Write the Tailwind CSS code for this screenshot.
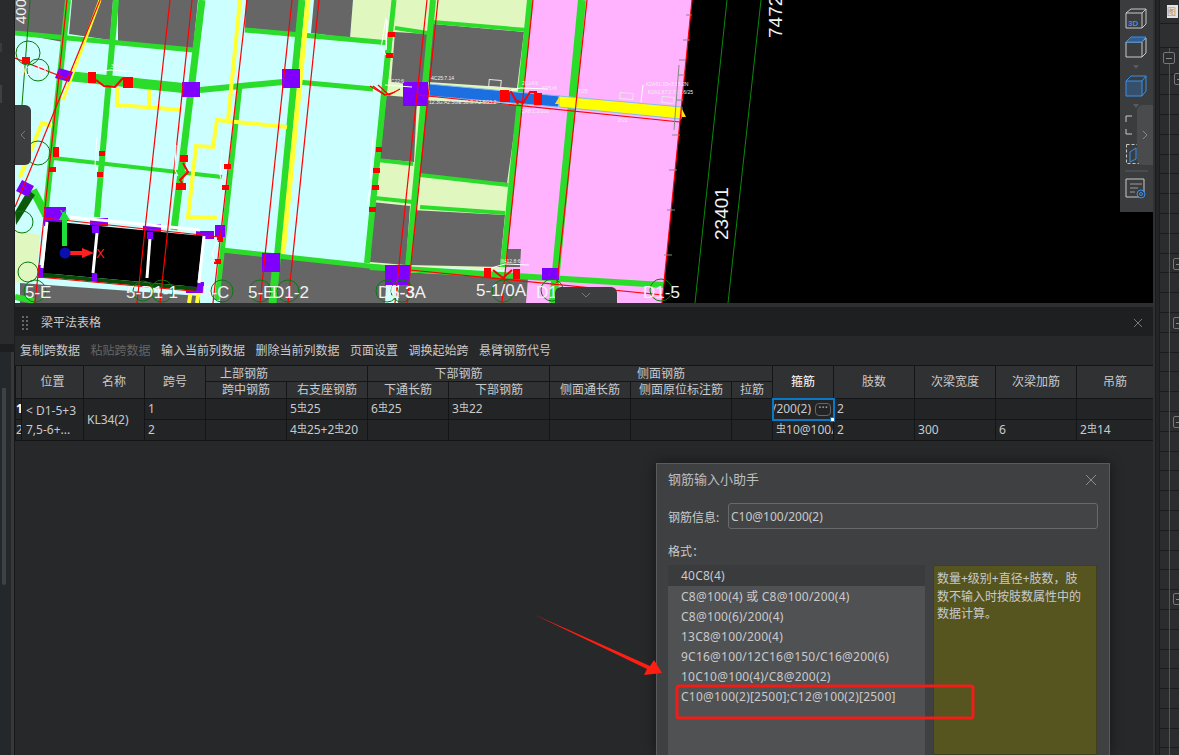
<!DOCTYPE html>
<html lang="zh">
<head>
    <meta charset="UTF-8">
    <title>梁平法表格</title>
    <script src="https://cdn.jsdelivr.net/npm/@tailwindcss/browser@4"></script>
</head>
<body class="bg-[#1b1c1d]">
<div class="relative flex w-[1179px] h-[755px] overflow-hidden text-xs text-[#c9cacb] font-['Noto_Sans','Noto_Sans_CJK_SC',sans-serif]">

    <!-- left dock -->
    <div class="flex flex-col w-[15px] shrink-0 bg-[#2a2b2c]">
        <div class="h-[344px] border-r border-[#1d1e1f] flex flex-col gap-[33px] pt-[43px]">
            <div class="w-[2px] h-[9px] bg-[#3a3b3c]"></div>
            <div class="w-[2px] h-[18px] bg-[#3f4041]"></div>
        </div>
        <div class="h-[8px] bg-[#1d1e1f]"></div>
        <div class="flex-1 flex">
            <div class="w-[11px] pt-[36px] pl-[2px] bg-[#25282a]">
                <div class="w-[4px] h-[197px] rounded-b-sm bg-[#3f4244]"></div>
            </div>
            <div class="w-[4px] bg-[#37383a] border-r border-[#18191a]"></div>
        </div>
    </div>

    <!-- centre -->
    <div class="flex flex-col w-[1138px] shrink-0">
        <div class="relative h-[303px] bg-black overflow-hidden">
            <svg class="block" width="1138" height="303" viewBox="15 0 1138 303" fill="none">
                <!-- floor -->
                <polygon points="15,0 533,0 502,303 15,303" fill="#ccffff"/>
                <polygon points="533,0 692,0 662,303 502,303" fill="#ffb3ff"/>
                <polygon points="15,230 40,235 36,280 15,283" fill="#e0f8c0"/>
                <polygon points="390,0 533,0 505,270 368,265" fill="#e0f8c0"/>
                <polygon points="353,0 390,0 386,42 350,38" fill="#e0f8c0"/>
                <!-- grey rooms -->
                <g fill="#666666">
                    <polygon points="15,0 66,0 63,42 15,33"/>
                    <polygon points="72,0 113,0 110,40 69,34"/>
                    <polygon points="118,0 198,0 193,50 118,41"/>
                    <polygon points="246,0 300,0 297,33 245,28"/>
                    <polygon points="314,0 353,0 350,38 311,33"/>
                    <polygon points="395,32 428,34 423,86 391,82"/>
                    <polygon points="433,24 524,32 517,88 428,82"/>
                    <polygon points="383,95 417,98 414,162 380,159"/>
                    <polygon points="422,100 518,105 507,183 418,176"/>
                    <polygon points="372,202 410,206 406,265 370,262"/>
                    <polygon points="412,210 505,215 500,267 409,265"/>
                    <polygon points="388,115 400,116 396,159 383,158"/>
                    <polygon points="222,252 387,269 385,303 220,303"/>
                    <polygon points="400,272 528,278 526,303 398,303"/>
                    <polygon points="20,283 200,296 200,303 20,303"/>
                    <polygon points="507,249 521,249 520,267 505,267"/>
                </g>
                <!-- walls -->
                <g stroke="#2bdc2b" stroke-width="5">
                    <line x1="15" y1="33" x2="193" y2="50"/>
                    <line x1="245" y1="30" x2="390" y2="43"/>
                    <line x1="68" y1="0" x2="45" y2="217" stroke-width="6"/>
                    <line x1="116" y1="0" x2="97" y2="217" stroke-width="6"/>
                    <line x1="202" y1="0" x2="174" y2="230" stroke-width="7"/>
                    <line x1="240" y1="85" x2="217" y2="300"/>
                    <line x1="302" y1="0" x2="273" y2="303" stroke-width="7"/>
                    <line x1="390" y1="33" x2="367" y2="263" stroke-width="6"/>
                    <line x1="68" y1="76" x2="183" y2="88" stroke-width="10"/>
                    <line x1="200" y1="90" x2="283" y2="82" stroke-width="6"/>
                    <line x1="298" y1="82" x2="373" y2="89"/>
                    <line x1="53" y1="158" x2="222" y2="177" stroke-width="4"/>
                    <line x1="222" y1="250" x2="387" y2="268"/>
                    <line x1="377" y1="160" x2="413" y2="164" stroke-width="4"/>
                    <line x1="375" y1="198" x2="413" y2="202" stroke-width="4"/>
                    <line x1="395" y1="28" x2="428" y2="33" stroke-width="4"/>
                    <line x1="433" y1="22" x2="527" y2="30" stroke-width="4"/>
                    <line x1="420" y1="175" x2="508" y2="185" stroke-width="4"/>
                    <line x1="420" y1="207" x2="505" y2="213" stroke-width="4"/>
                    <line x1="394" y1="0" x2="372" y2="210"/>
                    <line x1="433" y1="0" x2="408" y2="267" stroke-width="6"/>
                    <line x1="530" y1="0" x2="503" y2="267" stroke-width="6"/>
                    <line x1="582" y1="0" x2="553" y2="303" stroke-width="8"/>
                    <line x1="370" y1="267" x2="663" y2="285" stroke-width="6"/>
                    <line x1="15" y1="297" x2="34" y2="301" stroke-width="6"/>
                    <line x1="275" y1="272" x2="272" y2="303" stroke-width="7"/>
                    <line x1="33" y1="190" x2="46" y2="215" stroke-width="8"/>
                </g>
                <polygon points="16,225 35,195 28,190 15,212" fill="#0a5a0a"/>
                <!-- yellow -->
                <g stroke="#ffff33" stroke-width="4">
                    <polyline points="117,87 117,105 182,110"/>
                    <line x1="149" y1="90" x2="149" y2="107"/>
                    <polyline points="287,127 217,120 213,147 196,146 188,217 217,218"/>
                    <line x1="240" y1="0" x2="228" y2="120"/>
                    <line x1="308" y1="0" x2="283" y2="253" stroke-width="5"/>
                    <line x1="100" y1="0" x2="63" y2="100" stroke-width="3"/>
                    <polyline points="52,126 42,123 20,177" stroke-width="4"/>
                    <line x1="191" y1="290" x2="189" y2="303"/>
                    <line x1="199" y1="290" x2="197" y2="303"/>
                </g>
                <!-- active beam -->
                <polygon points="429,84 560,96 558,107 429,96" fill="#1b6fe0" stroke="#8bb8f0"/>
                <polygon points="559,96 682,107 681,119 559,107" fill="#ffff00" stroke="#8bb8f0"/>
                <polygon points="421,92 430,92 425,83" fill="#ffdf20"/>
                <polygon points="555,104 560,104 559,97" fill="#ffdf20"/>
                <polygon points="682,117 686,117 682,109" fill="#ffdf20"/>
                <!-- columns -->
                <g fill="#8000ff">
                    <rect x="182" y="82" width="18" height="15"/>
                    <rect x="282" y="69" width="18" height="19"/>
                    <rect x="262" y="253" width="18" height="19"/>
                    <rect x="385" y="265" width="25" height="20"/>
                    <rect x="403" y="82" width="25" height="24"/>
                    <rect x="542" y="268" width="17" height="12"/>
                    <polygon points="59,68 73,72 69,82 55,78"/>
                    <polygon points="22,180 34,186 28,197 16,191"/>
                    <rect x="44" y="207" width="22" height="19"/>
                    <rect x="90" y="218" width="18" height="8"/>
                    <rect x="143" y="224" width="18" height="8"/>
                    <rect x="196" y="231" width="18" height="8"/>
                    <rect x="215" y="225" width="10" height="12"/>
                    <rect x="38" y="265" width="15" height="13"/>
                    <rect x="186" y="282" width="18" height="11"/>
                </g>
                <!-- black block with the axis -->
                <polygon points="48,221 203,236 197,287 43,273" fill="#000000"/>
                <polygon points="43,273 197,287 196,291 43,277" fill="#064d06"/>
                <g stroke="#ffffff" stroke-width="3">
                    <line x1="97" y1="233" x2="93" y2="273"/>
                    <line x1="150" y1="238" x2="147" y2="278"/>
                    <line x1="204" y1="236" x2="199" y2="283"/>
                    <line x1="47" y1="222" x2="42" y2="268"/>
                    <line x1="70" y1="217" x2="200" y2="230"/>
                </g>
                <rect x="92" y="226" width="7" height="7" fill="#8000ff"/>
                <rect x="92" y="273" width="5" height="8" fill="#8000ff"/>
                <rect x="147" y="232" width="6" height="7" fill="#8000ff"/>
                <!-- red axes -->
                <g stroke="#ff0000" stroke-width="1.2">
                    <line x1="67" y1="0" x2="35" y2="303"/>
                    <line x1="170" y1="0" x2="137" y2="303"/>
                    <line x1="192" y1="0" x2="160" y2="303"/>
                    <line x1="247" y1="0" x2="213" y2="303"/>
                    <line x1="292" y1="0" x2="260" y2="303"/>
                    <line x1="319" y1="0" x2="288" y2="303"/>
                    <line x1="427" y1="0" x2="395" y2="303"/>
                    <line x1="438" y1="0" x2="407" y2="303"/>
                    <line x1="533" y1="0" x2="502" y2="303"/>
                    <line x1="587" y1="0" x2="557" y2="283"/>
                    <line x1="692" y1="0" x2="662" y2="303"/>
                    <line x1="100" y1="0" x2="15" y2="207"/>
                    <line x1="15" y1="58" x2="70" y2="80"/>
                    <line x1="44" y1="218" x2="220" y2="237"/>
                    <line x1="38" y1="277" x2="203" y2="292"/>
                    <line x1="418" y1="95" x2="680" y2="122"/>
                    <line x1="410" y1="270" x2="663" y2="295"/>
                    <polyline points="96,80 104,86 115,87 123,78" stroke-width="2"/>
                    <polyline points="373,86 385,95 395,92"/>
                    <polyline points="378,85 389,95 400,89"/>
                    <polyline points="183,163 188,172 180,180 184,186" stroke-width="2"/>
                    <polyline points="515,100 523,103 530,92 537,92" stroke-width="2"/>
                    <polyline points="510,90 518,104" stroke-width="2"/>
                    <polyline points="370,86 385,95"/>
                    <polyline points="493,270 503,278 512,270" stroke-width="2"/>
                </g>
                <g fill="#ff0000">
                    <rect x="88" y="72" width="8" height="11"/><rect x="123" y="77" width="10" height="11"/>
                    <rect x="180" y="155" width="8" height="7"/><rect x="176" y="183" width="10" height="7"/>
                    <rect x="500" y="90" width="10" height="12"/><rect x="534" y="93" width="8" height="12"/>
                    <rect x="484" y="268" width="7" height="10"/><rect x="513" y="269" width="7" height="10"/>
                    <rect x="22" y="57" width="8" height="7"/><rect x="53" y="147" width="6" height="10"/>
                    <rect x="99" y="151" width="6" height="5"/><rect x="97" y="172" width="6" height="5"/>
                    <rect x="49" y="167" width="7" height="5"/><rect x="224" y="164" width="7" height="5"/>
                    <rect x="222" y="185" width="7" height="5"/><rect x="217" y="237" width="6" height="5"/>
                    <rect x="214" y="259" width="7" height="5"/><rect x="388" y="32" width="7" height="5"/>
                    <rect x="386" y="53" width="7" height="5"/><rect x="376" y="147" width="6" height="5"/>
                    <rect x="373" y="168" width="7" height="5"/><rect x="372" y="185" width="7" height="5"/>
                    <rect x="369" y="207" width="7" height="5"/>
                </g>
                <!-- white leaders -->
                <g stroke="#ffffff" stroke-width="1">
                    <polyline points="96,72 110,70 137,72"/>
                    <polyline points="97,137 95,165 97,170"/>
                    <polyline points="176,145 175,170 178,176"/>
                    <polyline points="222,150 220,175 222,182"/>
                    <polyline points="386,18 381,48 386,55"/>
                    <polyline points="373,135 370,180"/>
                    <polyline points="370,188 367,205"/>
                    <polyline points="218,240 212,253 215,262"/>
                    <polyline points="385,85 412,87"/>
                    <polyline points="509,91 520,88 548,89"/>
                    <polyline points="491,268 505,264 529,265"/>
                    <polyline points="643,85 641,102"/>
                    <line x1="387" y1="20" x2="386" y2="50" stroke-width="1.5"/>
                </g>
                <g stroke="#e8e8e8" stroke-width="1">
                    <rect x="489" y="80" width="12" height="7" transform="rotate(5 495 83)"/>
                    <rect x="620" y="93" width="13" height="6" transform="rotate(5 626 96)"/>
                    <rect x="662" y="97" width="12" height="6" transform="rotate(5 668 100)"/>
                </g>
                <g fill="#f0f0f0" font-size="5" font-family="Liberation Sans">
                    <text x="431" y="80">4C25:7.14</text>
                    <text x="388" y="83">3C22:6</text>
                    <text x="522" y="85">2C14:6</text>
                    <text x="542" y="90">N75×8</text>
                    <text x="578" y="93">7/25</text>
                    <text x="646" y="86">K2A51:15×3.55.2N</text>
                    <text x="648" y="94">K2A1.87:2.7C7.6/25</text>
                    <text x="429" y="104">12.3G:A2.5GE:50.G:A2.5G3.2</text>
                    <text x="522" y="113">2A8:1.2/200</text>
                    <text x="618" y="122">2/22</text>
                    <text x="501" y="263">8412.8:6</text>
                    <text x="111" y="68">3C22:6</text>
                </g>
                <!-- grey scale on the slab edge -->
                <path d="M679,60 L686,60 M678,75 L685,75 M676,100 L683,100 M672,135 L680,135 M669,170 L677,170 M667,210 L675,210 M664,255 L672,255 M686,15 L692,15 M683,40 L690,40" stroke="#888888"/>
                <line x1="679" y1="65" x2="674" y2="130" stroke="#888888"/>
                <!-- far grid lines -->
                <line x1="727" y1="0" x2="695" y2="303" stroke="#0a8a0a"/>
                <line x1="761" y1="0" x2="728" y2="303" stroke="#0a8a0a"/>
                <line x1="30" y1="0" x2="22" y2="105" stroke="#0a7a0a"/>
                <!-- bubbles -->
                <g stroke="#0a7a0a" stroke-width="1">
                    <circle cx="28" cy="53" r="12"/><circle cx="38" cy="70" r="11"/><circle cx="38" cy="153" r="12"/>
                    <circle cx="22" cy="222" r="11"/><circle cx="28" cy="272" r="10"/><circle cx="35" cy="291" r="11"/>
                    <circle cx="143" cy="291" r="10"/><circle cx="162" cy="291" r="11"/><circle cx="222" cy="291" r="11"/>
                    <circle cx="260" cy="291" r="11"/><circle cx="288" cy="291" r="11"/><circle cx="387" cy="291" r="11"/>
                    <circle cx="402" cy="291" r="11"/><circle cx="503" cy="291" r="11"/><circle cx="552" cy="290" r="11"/>
                    <circle cx="661" cy="290" r="11"/>
                </g>
                <!-- axis gizmo -->
                <polygon points="63,212 59,220 62,220 62,246 67,246 67,220 70,220 65,212" fill="#1fe03a"/>
                <line x1="70" y1="253" x2="82" y2="253" stroke="#ff2020" stroke-width="4"/>
                <polygon points="82,248 94,253 82,258" fill="#ff2020"/>
                <circle cx="65" cy="253" r="5.5" fill="#0a10b0"/>
                <g font-family="Liberation Sans">
                    <text x="60" y="218" font-size="10" fill="#1fe03a">Y</text>
                    <text x="96" y="258" font-size="13" fill="#ff2020">X</text>
                </g>
                <!-- labels -->
                <g fill="#f2f2f2" font-size="17" font-family="Liberation Sans">
                    <text x="16" y="75" font-size="13">D1-D</text>
                    <text x="25" y="298">5-E</text>
                    <text x="126" y="298">5-D1-1</text>
                    <text x="202" y="298">5-C</text>
                    <text x="248" y="298">5-E</text>
                    <text x="272" y="298">D1-2</text>
                    <text x="378" y="298">D1-3</text>
                    <text x="390" y="298">5-3A</text>
                    <text x="476" y="296">5-1/0A</text>
                    <text x="536" y="298">D1</text>
                    <text x="643" y="298">D1-5</text>
                    <text transform="translate(728 240) rotate(-90)" font-size="19">23401</text>
                    <text transform="translate(782 38) rotate(-90)" font-size="19">7472</text>
                    <text transform="translate(26 24) rotate(-90)" font-size="15">400</text>
                </g>
            </svg>

            <!-- collapse handles -->
            <div class="absolute left-0 top-[105px] w-[16px] h-[60px] flex items-center justify-center rounded-r-md bg-[#3c3d3e]">
                <svg width="8" height="12" viewBox="0 0 8 12" fill="none" stroke="#777"><path d="M6 2 L2 6 L6 10"/></svg>
            </div>
            <div class="absolute left-[540px] bottom-0 w-[62px] h-[16px] flex items-center justify-center rounded-t-md bg-[#3c3d3e]">
                <svg width="12" height="8" viewBox="0 0 12 8" fill="none" stroke="#777"><path d="M2 2 L6 6 L10 2"/></svg>
            </div>

            <!-- view toolbar -->
            <div class="absolute right-0 top-0 w-[33px] h-[212px] bg-[#3b3c3e]">
                <svg width="33" height="212" viewBox="1120 0 33 212" fill="none" stroke-width="1">
                    <g stroke="#c8c8c8">
                        <path d="M1126 13 h16 v15 h-16 z M1126 13 l5 -4 h15 l-4 4 M1146 9 v15 l-4 4"/>
                        <path d="M1126 42 h16 v15 h-16 z M1142 42 l4 -4 v15 l-4 4"/>
                        <path d="M1126 122 v-6 h6 M1126 129 v5 h6"/>
                        <rect x="1126.5" y="144.5" width="20" height="19" stroke-dasharray="3 2"/>
                        <path d="M1126 179 h18 v13 M1126 179 v18 h13"/>
                        <path d="M1130 184 h12 M1130 188 h8 M1130 192 h5" stroke="#9a9a9a"/>
                    </g>
                    <g stroke="#3a8fe8">
                        <path d="M1126 42 l5 -5 h15 l-4 5 z" fill="#2d5f96"/>
                        <path d="M1126 81 h16 v15 h-16 z" fill="#35506c"/>
                        <path d="M1126 81 l5 -5 h15 l-4 5 M1146 76 v15 l-4 5"/>
                        <path d="M1130 152 l6 -4 v11 l-6 3 z"/>
                        <circle cx="1141" cy="194" r="4"/><circle cx="1141" cy="194" r="1.5"/>
                    </g>
                    <text x="1128" y="26" font-size="8" font-weight="700" fill="#3a8fe8" stroke="none" font-family="Liberation Sans">3D</text>
                    <polygon points="1133,65 1139,65 1136,69" fill="#555a66"/>
                    <polygon points="1133,104 1139,104 1136,108" fill="#555a66"/>
                    <line x1="1125" y1="171" x2="1148" y2="171" stroke="#5c5d5f"/>
                </svg>
                <div class="absolute right-0 top-[105px] w-[16px] h-[60px] flex items-center justify-center rounded-l-md bg-[#4a4b4c]">
                    <svg width="8" height="12" viewBox="0 0 8 12" fill="none" stroke="#888"><path d="M2 2 L6 6 L2 10"/></svg>
                </div>
            </div>
        </div>

        <!-- 梁平法表格 panel -->
        <div class="h-[4px] bg-[#2e2f30]"></div>
        <div class="flex-1 flex flex-col bg-[#27282a]">
            <div class="h-[29px] flex items-center pt-[2px] pl-[7px] pr-[10px] bg-[#1e1f20]">
                <div class="grid grid-cols-2 gap-x-[2px] gap-y-[2px] w-[6px] mr-[13px]">
                    <i class="w-[2px] h-[2px] bg-[#666]"></i><i class="w-[2px] h-[2px] bg-[#666]"></i>
                    <i class="w-[2px] h-[2px] bg-[#666]"></i><i class="w-[2px] h-[2px] bg-[#666]"></i>
                    <i class="w-[2px] h-[2px] bg-[#666]"></i><i class="w-[2px] h-[2px] bg-[#666]"></i>
                    <i class="w-[2px] h-[2px] bg-[#666]"></i><i class="w-[2px] h-[2px] bg-[#666]"></i>
                </div>
                <span>梁平法表格</span>
                <svg class="ml-auto" width="10" height="10" viewBox="0 0 10 10" stroke="#777"><path d="M1 1 L9 9 M9 1 L1 9"/></svg>
            </div>
            <div class="h-[29px] flex items-center gap-[10.5px] pl-[5px]">
                <span>复制跨数据</span>
                <span class="text-[#646566]">粘贴跨数据</span>
                <span>输入当前列数据</span>
                <span>删除当前列数据</span>
                <span>页面设置</span>
                <span>调换起始跨</span>
                <span>悬臂钢筋代号</span>
            </div>
            <table class="table-fixed border-collapse w-[1138px] [&_td]:border [&_td]:border-[#141516] [&_th]:border [&_th]:border-[#141516] [&_th]:font-normal [&_th]:bg-[#303133] [&_td]:bg-[#232426] [&_td]:px-[3px] [&_td]:overflow-hidden [&_td]:whitespace-nowrap">
                <colgroup>
                    <col class="w-[6px]"><col class="w-[62px]"><col class="w-[61px]"><col class="w-[61px]">
                    <col class="w-[81px]"><col class="w-[81px]"><col class="w-[81px]"><col class="w-[101px]">
                    <col class="w-[81px]"><col class="w-[101px]"><col class="w-[41px]"><col class="w-[61px]">
                    <col class="w-[81px]"><col class="w-[81px]"><col class="w-[81px]"><col class="w-[77px]">
                </colgroup>
                <thead>
                    <tr class="h-[16px]">
                        <th rowspan="2"></th>
                        <th rowspan="2">位置</th>
                        <th rowspan="2">名称</th>
                        <th rowspan="2">跨号</th>
                        <th colspan="2"><span class="block text-left pl-[14px] leading-none">上部钢筋</span></th>
                        <th colspan="2" class="leading-none">下部钢筋</th>
                        <th colspan="3" class="leading-none">侧面钢筋</th>
                        <th rowspan="2" class="font-bold text-white">箍筋</th>
                        <th rowspan="2">肢数</th>
                        <th rowspan="2">次梁宽度</th>
                        <th rowspan="2">次梁加筋</th>
                        <th rowspan="2">吊筋</th>
                    </tr>
                    <tr class="h-[17px] leading-none">
                        <th>跨中钢筋</th><th>右支座钢筋</th><th>下通长筋</th><th>下部钢筋</th>
                        <th>侧面通长筋</th><th>侧面原位标注筋</th><th>拉筋</th>
                    </tr>
                </thead>
                <tbody>
                    <tr class="h-[21px]">
                        <td class="!px-0 text-center font-bold text-white">1</td>
                        <td rowspan="2" class="!whitespace-normal !px-[4px] leading-[19px] break-all">&lt;&nbsp;D1-5+3<br>7,5-6+...</td>
                        <td rowspan="2">KL34(2)</td>
                        <td>1</td>
                        <td></td>
                        <td>5<sup class="text-[10px] -top-[2px]">虫</sup>25</td>
                        <td>6<sup class="text-[10px] -top-[2px]">虫</sup>25</td>
                        <td>3<sup class="text-[10px] -top-[2px]">虫</sup>22</td>
                        <td></td><td></td><td></td>
                        <td class="relative !px-0 outline outline-2 -outline-offset-1 outline-[#0a78c8]">
                            <div class="flex justify-end items-center overflow-hidden pr-[2px]">
                                <span class="shrink-0">C10@100/200(2)</span>
                                <span class="shrink-0 ml-[4px] w-[16px] h-[13px] leading-[7px] text-center border border-[#666] rounded-sm text-[#aaa]">···</span>
                            </div>
                        </td>
                        <td>2</td><td></td><td></td><td></td>
                    </tr>
                    <tr class="h-[21px]">
                        <td class="!px-0 text-center">2</td>
                        <td>2</td>
                        <td></td>
                        <td>4<sup class="text-[10px] -top-[2px]">虫</sup>25+2<sup class="text-[10px] -top-[2px]">虫</sup>20</td>
                        <td></td><td></td><td></td><td></td><td></td>
                        <td><sup class="text-[10px] -top-[2px]">虫</sup>10@100/200(2)</td>
                        <td>2</td><td>300</td><td>6</td>
                        <td>2<sup class="text-[10px] -top-[2px]">虫</sup>14</td>
                    </tr>
                </tbody>
            </table>
        </div>
    </div>

    <!-- right dock -->
    <div class="flex w-[26px] shrink-0 bg-[#2b2c2d]">
        <div class="w-[3px] bg-[#303132] border-r border-[#1b1c1d]"></div>
        <div class="w-[3px] bg-[#242526]"></div>
        <div class="flex-1 flex flex-col border-l border-[#1b1c1d]">
            <div class="h-[24px] pl-[7px] pt-[5px] bg-[#2c2d2e] border-b border-[#1b1c1d]">
                <span class="block w-[11px] h-[13px] text-[9px] leading-[13px] overflow-hidden text-[#b08a60] bg-[#e4e4e4]">图</span>
            </div>
            <div class="h-[24px] border-b border-[#1b1c1d] bg-[#2e2f30]"></div>
            <div id="tree" class="relative flex-1 overflow-hidden pt-[7.6px]">
                <div class="absolute left-[9px] top-0 bottom-0 w-px bg-[#555657]"></div>
            </div>
        </div>
    </div>

    <!-- helper dialog -->
    <div class="absolute left-[656px] top-[463px] w-[454px] h-[292px] px-[11px] bg-[#3f4042] border border-[#5a5b5c] border-b-0 shadow-[0_0_12px_rgba(0,0,0,0.45)]">
        <div class="flex items-center justify-between h-[31px]">
            <span class="text-[13px] text-[#bdbebf]">钢筋输入小助手</span>
            <svg width="12" height="12" viewBox="0 0 12 12" stroke="#8c8d8e" class="mr-[1px]"><path d="M1 1 L11 11 M11 1 L1 11"/></svg>
        </div>
        <div class="flex items-center mt-[8px]">
            <span class="w-[60px] shrink-0 pt-[3px]">钢筋信息:</span>
            <div class="w-[370px] h-[26px] leading-[25px] px-[2px] rounded-[3px] border border-[#68696a] bg-[#434446]">C10@100/200(2)</div>
        </div>
        <div class="mt-[14px] h-[18px] leading-[18px]">格式：</div>
        <div class="flex gap-[8px] mt-[4px]">
            <div class="w-[257px] h-[190px] bg-[#505153] tracking-[0.22px] [&_div]:pl-[13px] [&_div]:h-[20px] [&_div]:leading-[22px]">
                <div class="!h-[21px] bg-[#3a3b3d]">40C8(4)</div>
                <div>C8@100(4) 或 C8@100/200(4)</div>
                <div>C8@100(6)/200(4)</div>
                <div>13C8@100/200(4)</div>
                <div>9C16@100/12C16@150/C16@200(6)</div>
                <div>10C10@100(4)/C8@200(2)</div>
                <div>C10@100(2)[2500];C12@100(2)[2500]</div>
            </div>
            <div class="w-[164px] h-[190px] px-[3px] pt-[4px] leading-[17.5px] whitespace-nowrap bg-[#57551f] border border-[#3e3e22]">数量+级别+直径+肢数，肢<br>数不输入时按肢数属性中的<br>数据计算。</div>
        </div>
    </div>

    <!-- red annotation, cell handle -->
    <svg class="absolute left-0 top-0 pointer-events-none" width="1179" height="755" viewBox="0 0 1179 755" fill="none">
        <rect x="830.5" y="417.5" width="4" height="4" fill="#ffffff" stroke="#0a78c8"/>
        <polygon points="533,614 650,666 654,660 662,673 644,675 647,669" fill="#ff1f12"/>
        <rect x="677" y="686" width="296" height="32" rx="2" stroke="#f21d16" stroke-width="3"/>
    </svg>
</div>
<script>
    // tree rows on the right dock, every 19.8px
    var tree = document.getElementById('tree');
    for (var i = 0; i < 36; i++) {
        var row = document.createElement('div');
        row.className = 'h-[19.8px] border-b border-[#1b1c1d]';
        tree.appendChild(row);
    }
    // collapse boxes: [left, top] inside the tree
    var boxes = [[3, 4], [14, 25], [13, 210], [13, 269], [13, 368], [13, 545]];
    boxes.forEach(function(b) {
        var box = document.createElement('span');
        box.className = 'absolute w-[12px] h-[12px] flex items-center justify-center border border-[#777] rounded-[2px] bg-[#2b2c2d]';
        box.style.left = b[0] + 'px';
        box.style.top = b[1] + 'px';
        box.innerHTML = '<i class="w-[6px] h-px bg-[#888]"></i>';
        tree.appendChild(box);
    });
</script>
</body>
</html>
